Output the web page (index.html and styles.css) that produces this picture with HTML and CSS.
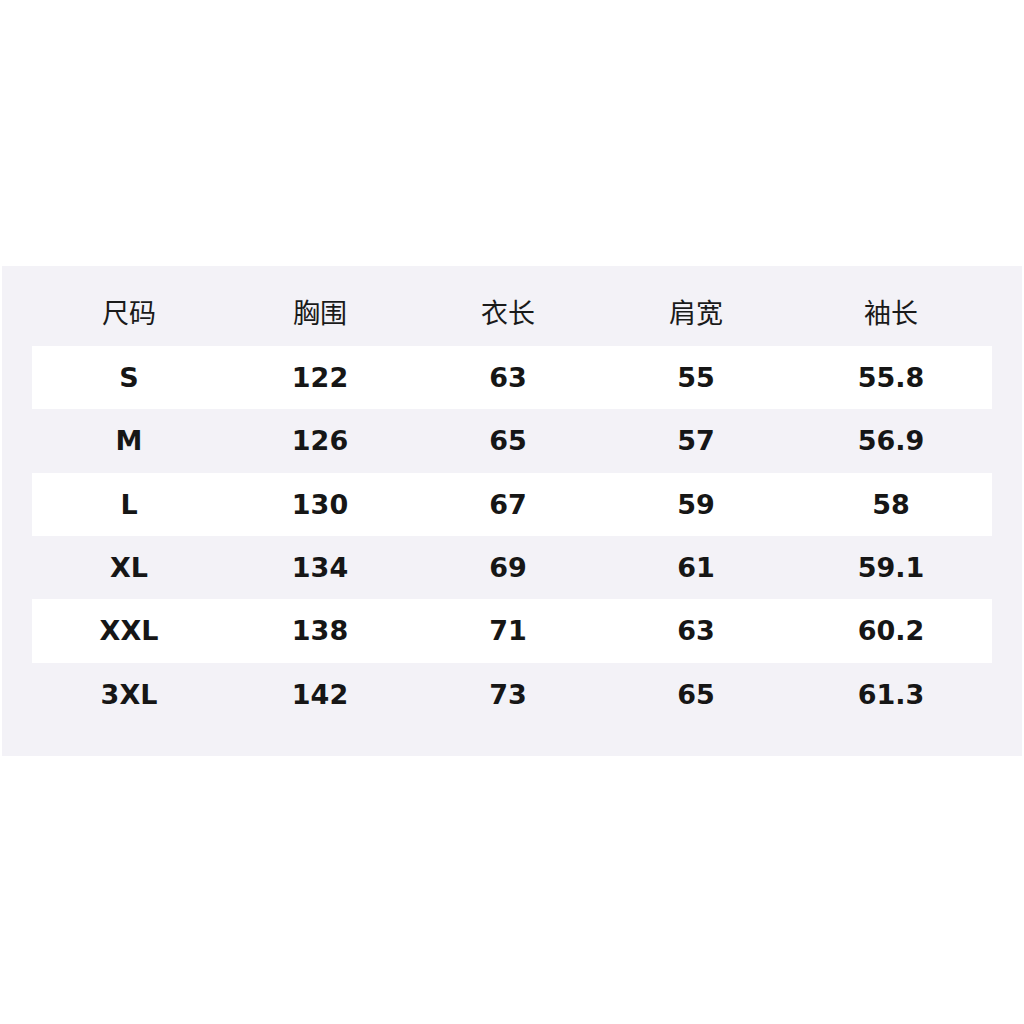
FILE: index.html
```html
<!DOCTYPE html>
<html lang="zh">
<head>
<meta charset="utf-8">
<title>尺码表</title>
<link rel="stylesheet" href="styles.css">
</head>
<body>
<div class="page">
  <div class="panel">
    <div class="row head">
      <div>尺码</div><div>胸围</div><div>衣长</div><div>肩宽</div><div>袖长</div>
    </div>
    <div class="row alt"><div>S</div><div>122</div><div>63</div><div>55</div><div>55.8</div></div>
    <div class="row"><div>M</div><div>126</div><div>65</div><div>57</div><div>56.9</div></div>
    <div class="row alt"><div>L</div><div>130</div><div>67</div><div>59</div><div>58</div></div>
    <div class="row"><div>XL</div><div>134</div><div>69</div><div>61</div><div>59.1</div></div>
    <div class="row alt"><div>XXL</div><div>138</div><div>71</div><div>63</div><div>60.2</div></div>
    <div class="row"><div>3XL</div><div>142</div><div>73</div><div>65</div><div>61.3</div></div>
  </div>
</div>
</body>
</html>
```
FILE: styles.css
```css
html, body {
  margin: 0;
  padding: 0;
  background: #ffffff;
}
.page {
  width: 1024px;
  height: 1024px;
  padding: 266px 2px 0 2px;
  box-sizing: border-box;
}
.panel {
  background: #f3f2f7;
  padding: 30px 30px 30px 30px;
  height: 490px;
  box-sizing: border-box;
}
.row {
  display: grid;
  grid-template-columns: 194px 188px 188px 188px 202px;
  height: 63.33px;
  align-items: center;
  justify-items: center;
  font-family: "DejaVu Sans", "Noto Sans CJK SC", sans-serif;
  font-weight: bold;
  font-size: 27px;
  color: #161616;
}
.row.alt {
  background: #ffffff;
}
.row.head {
  height: 50px;
  align-items: start;
  font-family: "Noto Sans CJK SC", sans-serif;
  font-weight: normal;
  font-size: 27px;
  line-height: 32px;
  color: #1a1a1a;
}
```
